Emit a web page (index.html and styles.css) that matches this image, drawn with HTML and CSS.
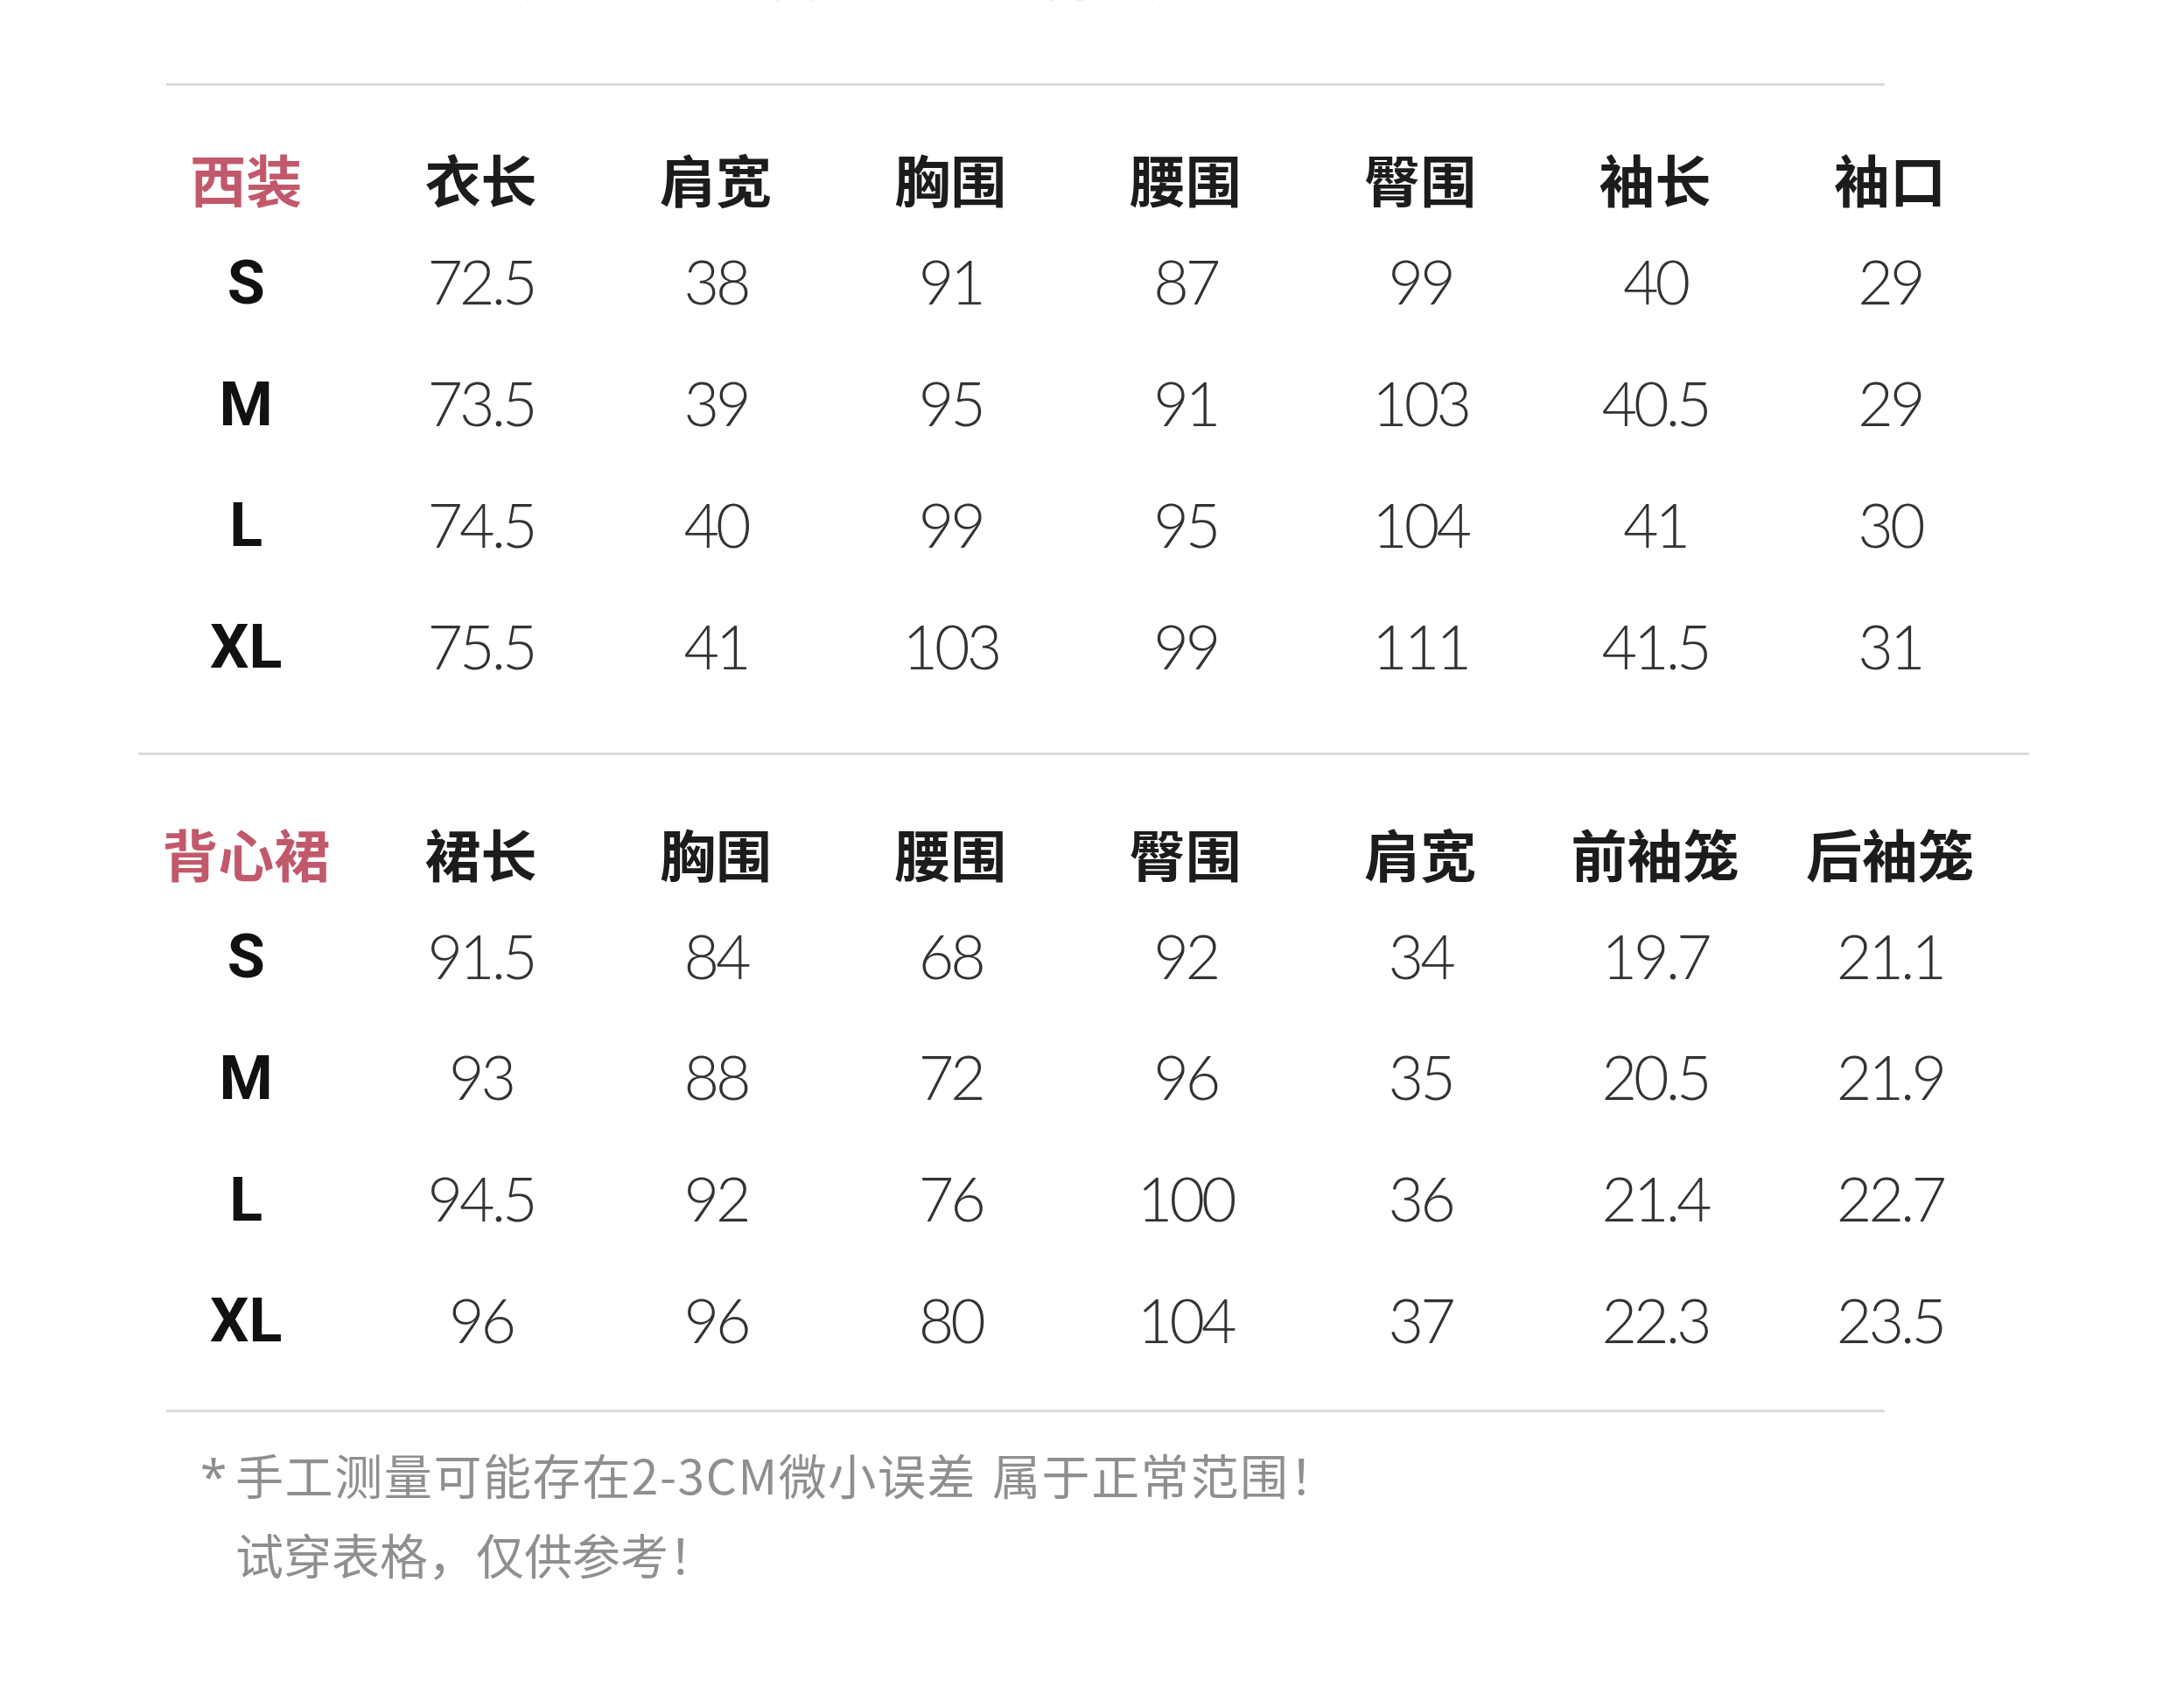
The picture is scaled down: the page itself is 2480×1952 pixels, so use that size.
FILE: index.html
```html
<!DOCTYPE html>
<html lang="zh-CN">
<head>
<meta charset="utf-8">
<title>尺码表</title>
<link rel="stylesheet" href="styles.css">
</head>
<body>
<div class="page">
  <div class="cutoff">平铺测量数据 单位：CM 因测量方法不同 可能存在误差</div>
  <div class="rule rule-short rule-1"></div>

  <div class="size-table t1">
    <div class="cell head accent">西装</div>
    <div class="cell head">衣长</div>
    <div class="cell head">肩宽</div>
    <div class="cell head">胸围</div>
    <div class="cell head">腰围</div>
    <div class="cell head">臀围</div>
    <div class="cell head">袖长</div>
    <div class="cell head">袖口</div>

    <div class="cell size">S</div>
    <div class="cell num">72.5</div><div class="cell num">38</div><div class="cell num">91</div><div class="cell num">87</div><div class="cell num">99</div><div class="cell num">40</div><div class="cell num">29</div>

    <div class="cell size">M</div>
    <div class="cell num">73.5</div><div class="cell num">39</div><div class="cell num">95</div><div class="cell num">91</div><div class="cell num">103</div><div class="cell num">40.5</div><div class="cell num">29</div>

    <div class="cell size">L</div>
    <div class="cell num">74.5</div><div class="cell num">40</div><div class="cell num">99</div><div class="cell num">95</div><div class="cell num">104</div><div class="cell num">41</div><div class="cell num">30</div>

    <div class="cell size">XL</div>
    <div class="cell num">75.5</div><div class="cell num">41</div><div class="cell num">103</div><div class="cell num">99</div><div class="cell num">111</div><div class="cell num">41.5</div><div class="cell num">31</div>
  </div>

  <div class="rule rule-wide rule-2"></div>

  <div class="size-table t2">
    <div class="cell head accent">背心裙</div>
    <div class="cell head">裙长</div>
    <div class="cell head">胸围</div>
    <div class="cell head">腰围</div>
    <div class="cell head">臀围</div>
    <div class="cell head">肩宽</div>
    <div class="cell head">前袖笼</div>
    <div class="cell head">后袖笼</div>

    <div class="cell size">S</div>
    <div class="cell num">91.5</div><div class="cell num">84</div><div class="cell num">68</div><div class="cell num">92</div><div class="cell num">34</div><div class="cell num">19.7</div><div class="cell num">21.1</div>

    <div class="cell size">M</div>
    <div class="cell num">93</div><div class="cell num">88</div><div class="cell num">72</div><div class="cell num">96</div><div class="cell num">35</div><div class="cell num">20.5</div><div class="cell num">21.9</div>

    <div class="cell size">L</div>
    <div class="cell num">94.5</div><div class="cell num">92</div><div class="cell num">76</div><div class="cell num">100</div><div class="cell num">36</div><div class="cell num">21.4</div><div class="cell num">22.7</div>

    <div class="cell size">XL</div>
    <div class="cell num">96</div><div class="cell num">96</div><div class="cell num">80</div><div class="cell num">104</div><div class="cell num">37</div><div class="cell num">22.3</div><div class="cell num">23.5</div>
  </div>

  <div class="rule rule-short rule-3"></div>

  <div class="note">
    <p class="note-line note-first"><span class="star">*</span>手工测量可能存在2-3CM微小误差 属于正常范围！</p>
    <p class="note-line">试穿表格，仅供参考！</p>
  </div>
</div>
</body>
</html>
```

FILE: styles.css
```css
html, body {
  margin: 0;
  padding: 0;
  background: #ffffff;
}

.page {
  width: 2480px;
  height: 1952px;
  overflow: hidden;
  font-family: "Noto Sans CJK SC", "Noto Sans", sans-serif;
}

.cutoff {
  margin: -56px 0 0 316px;
  height: 60px;
  line-height: 60px;
  font-size: 52px;
  color: #e2e2e2;
  white-space: nowrap;
}

.rule {
  height: 3px;
  background: #dadada;
}

.rule-short {
  margin-left: 190px;
  width: 1964px;
}

.rule-wide {
  margin-left: 158px;
  width: 2161px;
}

.rule-1 { margin-top: 91px; }
.rule-2 { margin-top: 52px; }
.rule-3 { margin-top: 32px; }

.size-table {
  display: grid;
  grid-template-columns: repeat(8, 268.4px);
  grid-template-rows: 92.6px repeat(4, 138.7px);
  padding-left: 147px;
}

.t1 { margin-top: 63px; }
.t2 { margin-top: 68px; }

.cell {
  display: flex;
  align-items: center;
  justify-content: center;
  white-space: nowrap;
}

.head {
  font-family: "Noto Sans CJK SC", sans-serif;
  font-weight: 700;
  font-size: 64px;
  color: #1c1c1c;
  padding-bottom: 8px;
}

.head.accent {
  color: #c2596b;
}

.size {
  font-family: Roboto, "Noto Sans", sans-serif;
  font-weight: 700;
  font-size: 70px;
  color: #111111;
}

.num {
  font-family: Lato, "Open Sans", sans-serif;
  font-weight: 300;
  font-size: 70px;
  letter-spacing: -4px;
  color: #333333;
  padding-bottom: 3px;
}

.note {
  margin-top: 26px;
  padding-left: 269px;
  color: #8f8f8f;
  font-size: 55px;
}

.note-line {
  margin: 0;
  line-height: 89px;
  white-space: nowrap;
}

.note-first {
  letter-spacing: 1.6px;
  word-spacing: 4px;
}

.star {
  display: inline-block;
  width: 40px;
  margin-left: -40px;
  font-family: "Noto Sans", sans-serif;
}
```
